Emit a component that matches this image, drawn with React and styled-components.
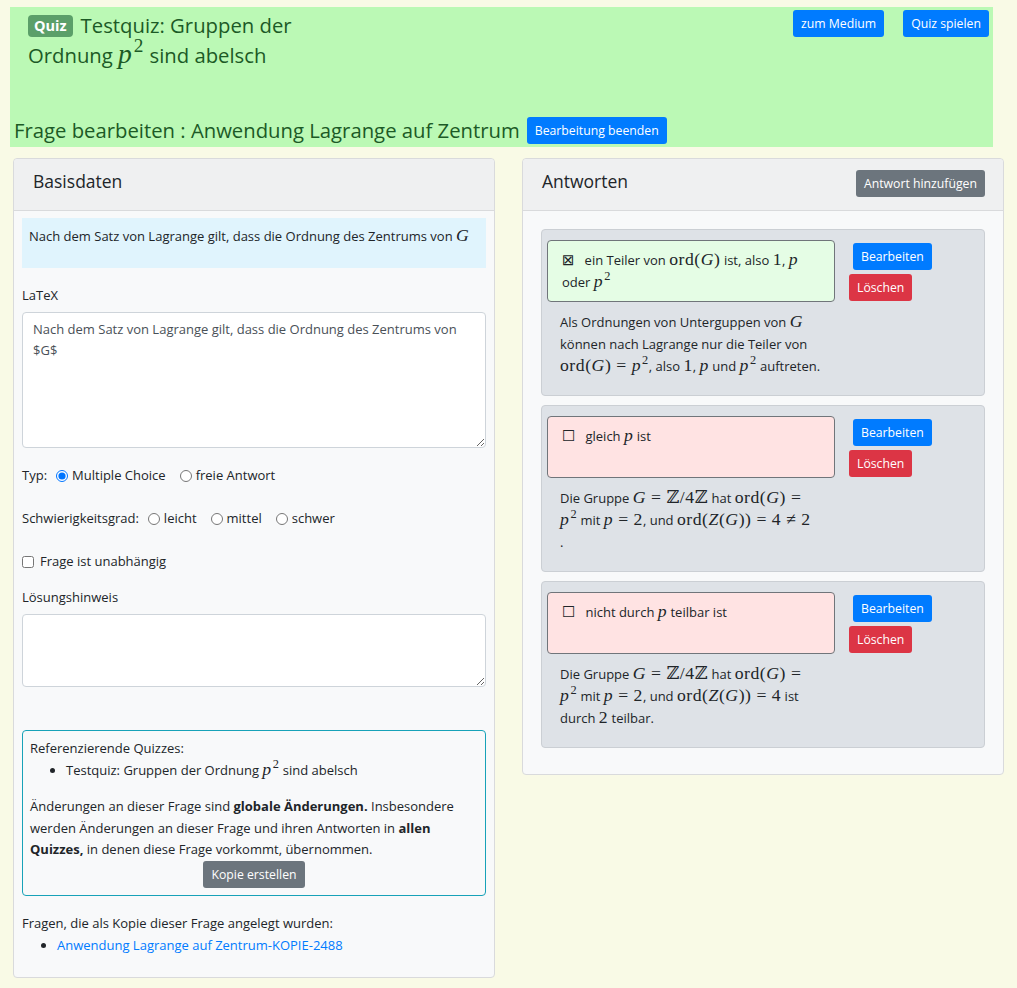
import styled, { createGlobalStyle } from "styled-components";

const GlobalStyle = createGlobalStyle`
  * {
    box-sizing: border-box;
  }
  body {
    margin: 0;
    background: #f9fae6;
    font-family: "Open Sans", "Noto Sans", sans-serif;
    font-size: 13px;
    line-height: 21px;
    color: #212529;
  }
`;

const Header = styled.header`
  margin: 7px 24px 0 10px;
  padding: 3px 4px 2px 4px;
  background: #bbf9b5;
  color: #1c5a26;
`;

const TopRow = styled.div`
  display: flex;
  justify-content: space-between;
  align-items: flex-start;
`;

const QuizTitle = styled.h1`
  margin: 0 0 0 14px;
  width: 280px;
  font-size: 20.3px;
  font-weight: 400;
  line-height: 30px;
`;

const Badge = styled.span`
  display: inline-block;
  margin-right: 8px;
  padding: 0 6px;
  border-radius: 4px;
  background: #5b9f69;
  color: #fff;
  font-size: 14.5px;
  font-weight: 700;
  line-height: 22px;
  vertical-align: 2px;
`;

const ButtonGroup = styled.div`
  display: flex;
  gap: 19px;
`;

const Button = styled.button`
  padding: 3px 8px;
  border: none;
  border-radius: 3px;
  background: ${(p) => p.$bg || "#007bff"};
  color: #fff;
  font-family: inherit;
  font-size: 12.25px;
  line-height: 21px;
  cursor: pointer;
  white-space: nowrap;
`;

const EditRow = styled.div`
  display: flex;
  align-items: center;
  gap: 7px;
  margin-top: 45px;
`;

const EditTitle = styled.h2`
  margin: 0;
  font-size: 20.3px;
  font-weight: 400;
  line-height: 30px;
`;

const Columns = styled.main`
  display: grid;
  grid-template-columns: 482px 482px;
  gap: 27px;
  align-items: start;
  padding: 11px 0 12px 13px;
`;

const Card = styled.section`
  background: #f8f9fa;
  border: 1px solid #d9dadc;
  border-radius: 4px;
`;

const CardHeader = styled.div`
  display: flex;
  align-items: center;
  justify-content: space-between;
  height: 52px;
  padding: 0 18px 2px 19px;
  background: #eff0f1;
  border-bottom: 1px solid #d9dadc;
  border-radius: 4px 4px 0 0;
`;

const CardTitle = styled.h3`
  margin: 0 0 4px;
  font-size: 17.5px;
  font-weight: 400;
`;

const CardBody = styled.div`
  padding: ${(p) => p.$pad};
`;

const InfoBox = styled.div`
  padding: 8px 7px 21px;
  background: #e0f4fd;
`;

const Label = styled.div`
  margin: ${(p) => p.$top || 17}px 0 6px;
`;

const TextArea = styled.textarea`
  display: block;
  width: 100%;
  height: ${(p) => p.$h}px;
  padding: 6px 10px;
  border: 1px solid #ced4da;
  border-radius: 4px;
  background: #fff;
  color: #495057;
  font-family: inherit;
  font-size: 13px;
  line-height: 21px;
  resize: vertical;
`;

const FieldRow = styled.div`
  display: flex;
  align-items: center;
  margin-top: ${(p) => p.$top}px;
`;

const Option = styled.label`
  display: inline-flex;
  align-items: center;
  margin-left: ${(p) => p.$gap ?? 10}px;

  input {
    margin: 0 4px 0 0;
    width: 12px;
    height: 12px;
  }
`;

const CheckOption = styled.label`
  display: inline-flex;
  align-items: center;

  input {
    margin: 0 6px 0 0;
    width: 12px;
    height: 12px;
  }
`;

const RefBox = styled.div`
  margin-top: 43px;
  padding: 7px 7px 7px 7px;
  border: 1px solid #17a2b8;
  border-radius: 4px;
`;

const List = styled.ul`
  margin: 0 0 ${(p) => p.$mb || 0}px;
  padding-left: ${(p) => p.$indent}px;

  li {
    line-height: 22px;
  }
`;

const Para = styled.p`
  margin: 15px 0 0;
  line-height: 21.5px;
`;

const Center = styled.div`
  display: flex;
  justify-content: center;
`;

const Note = styled.div`
  margin-top: 17px;
`;

const Link = styled.a`
  color: #007bff;
  text-decoration: none;
`;

const AnswerBlock = styled.div`
  display: grid;
  grid-template-columns: 288px auto;
  column-gap: 14px;
  align-content: start;
  min-height: 167px;
  margin-bottom: 9px;
  padding: 10px 6px 10px 5px;
  background: #dee2e7;
  border: 1px solid #cbcfd4;
  border-radius: 4px;
`;

const AnswerBox = styled.div`
  min-height: 62px;
  padding: 8px 14px;
  border: 1px solid #70757a;
  border-radius: 4px;
  background: ${(p) => (p.$correct ? "#e5fde5" : "#ffe3e3")};
  line-height: 22px;
`;

const Mark = styled.span`
  margin-right: 10px;
  font-family: "DejaVu Sans", sans-serif;
  font-size: 15px;
`;

const Actions = styled.div`
  display: flex;
  flex-direction: column;
  align-items: flex-start;
  gap: 4px;
  padding-top: 3px;

  & > :first-child {
    margin-left: 4px;
  }
`;

const Explanation = styled.div`
  padding: 9px 0 0 13px;
  line-height: 22px;
`;

const M = styled.span`
  font-family: "Liberation Serif", "DejaVu Serif", serif;
  font-size: 1.36em;
  letter-spacing: 0.03em;
  line-height: 0;
  white-space: nowrap;

  i {
    font-style: italic;
  }
  sup {
    font-size: 0.7em;
    line-height: 0;
    vertical-align: 0.55em;
    margin-left: 1px;
  }
`;

const Op = styled.span`
  margin: 0 0.28em;
`;

const P2 = () => (
  <M>
    <i>p</i>
    <sup>2</sup>
  </M>
);

const Var = ({ children }) => (
  <M>
    <i>{children}</i>
  </M>
);

const OrdG = () => (
  <>
    ord(<i>G</i>)
  </>
);

const GroupIntro = () => (
  <>
    Die Gruppe{" "}
    <M>
      <i>G</i>
      <Op>=</Op>ℤ/4ℤ
    </M>{" "}
    hat{" "}
    <M>
      <OrdG />
      <Op>=</Op>
    </M>
    <br />
    <P2 /> mit{" "}
    <M>
      <i>p</i>
      <Op>=</Op>2
    </M>
    , und{" "}
  </>
);

const answers = [
  {
    correct: true,
    text: (
      <>
        ein Teiler von{" "}
        <M>
          <OrdG />
        </M>{" "}
        ist, also <M>1</M>, <Var>p</Var> oder <P2 />
      </>
    ),
    explanation: (
      <>
        Als Ordnungen von Unterguppen von <Var>G</Var> können nach Lagrange nur
        die Teiler von{" "}
        <M>
          <OrdG />
          <Op>=</Op>
          <i>p</i>
          <sup>2</sup>
        </M>
        , also <M>1</M>, <Var>p</Var> und <P2 /> auftreten.
      </>
    ),
  },
  {
    correct: false,
    text: (
      <>
        gleich <Var>p</Var> ist
      </>
    ),
    explanation: (
      <>
        <GroupIntro />
        <M>
          ord(<i>Z</i>(<i>G</i>))<Op>=</Op>4<Op>≠</Op>2
        </M>
        <br />.
      </>
    ),
  },
  {
    correct: false,
    text: (
      <>
        nicht durch <Var>p</Var> teilbar ist
      </>
    ),
    explanation: (
      <>
        <GroupIntro />
        <M>
          ord(<i>Z</i>(<i>G</i>))<Op>=</Op>4
        </M>{" "}
        ist durch <M>2</M> teilbar.
      </>
    ),
  },
];

const App = () => {
  return (
    <>
      <GlobalStyle />
      <Header>
        <TopRow>
          <QuizTitle>
            <Badge>Quiz</Badge>Testquiz: Gruppen der Ordnung <P2 /> sind
            abelsch
          </QuizTitle>
          <ButtonGroup>
            <Button>zum Medium</Button>
            <Button>Quiz spielen</Button>
          </ButtonGroup>
        </TopRow>
        <EditRow>
          <EditTitle>Frage bearbeiten : Anwendung Lagrange auf Zentrum</EditTitle>
          <Button>Bearbeitung beenden</Button>
        </EditRow>
      </Header>

      <Columns>
        <Card>
          <CardHeader>
            <CardTitle>Basisdaten</CardTitle>
          </CardHeader>
          <CardBody $pad="7px 8px 7px">
            <InfoBox>
              Nach dem Satz von Lagrange gilt, dass die Ordnung des Zentrums von{" "}
              <Var>G</Var>
            </InfoBox>

            <Label>LaTeX</Label>
            <TextArea
              $h={136}
              defaultValue="Nach dem Satz von Lagrange gilt, dass die Ordnung des Zentrums von $G$"
            />

            <FieldRow $top={17}>
              Typ:
              <Option $gap={9}>
                <input type="radio" name="typ" defaultChecked />
                Multiple Choice
              </Option>
              <Option $gap={14}>
                <input type="radio" name="typ" />
                freie Antwort
              </Option>
            </FieldRow>

            <FieldRow $top={22}>
              Schwierigkeitsgrad:
              <Option $gap={9}>
                <input type="radio" name="grad" />
                leicht
              </Option>
              <Option $gap={14}>
                <input type="radio" name="grad" />
                mittel
              </Option>
              <Option $gap={14}>
                <input type="radio" name="grad" />
                schwer
              </Option>
            </FieldRow>

            <FieldRow $top={22}>
              <CheckOption>
                <input type="checkbox" />
                Frage ist unabhängig
              </CheckOption>
            </FieldRow>

            <Label $top={15}>Lösungshinweis</Label>
            <TextArea $h={73} />

            <RefBox>
              Referenzierende Quizzes:
              <List $indent={36}>
                <li>
                  Testquiz: Gruppen der Ordnung <P2 /> sind abelsch
                </li>
              </List>
              <Para>
                Änderungen an dieser Frage sind <b>globale Änderungen.</b>{" "}
                Insbesondere werden Änderungen an dieser Frage und ihren
                Antworten in <b>allen Quizzes,</b> in denen diese Frage
                vorkommt, übernommen.
              </Para>
              <Center>
                <Button $bg="#6c757d">Kopie erstellen</Button>
              </Center>
            </RefBox>

            <Note>
              Fragen, die als Kopie dieser Frage angelegt wurden:
              <List $indent={35} $mb={14}>
                <li>
                  <Link href="#">Anwendung Lagrange auf Zentrum-KOPIE-2488</Link>
                </li>
              </List>
            </Note>
          </CardBody>
        </Card>

        <Card>
          <CardHeader>
            <CardTitle>Antworten</CardTitle>
            <Button $bg="#6c757d">Antwort hinzufügen</Button>
          </CardHeader>
          <CardBody $pad="18px 18px 17px">
            {answers.map((a, i) => (
              <AnswerBlock key={i}>
                <AnswerBox $correct={a.correct}>
                  <Mark>{a.correct ? "⊠" : "☐"}</Mark>
                  {a.text}
                </AnswerBox>
                <Actions>
                  <Button>Bearbeiten</Button>
                  <Button $bg="#dc3545">Löschen</Button>
                </Actions>
                <Explanation>{a.explanation}</Explanation>
              </AnswerBlock>
            ))}
          </CardBody>
        </Card>
      </Columns>
    </>
  );
};

export default App;
